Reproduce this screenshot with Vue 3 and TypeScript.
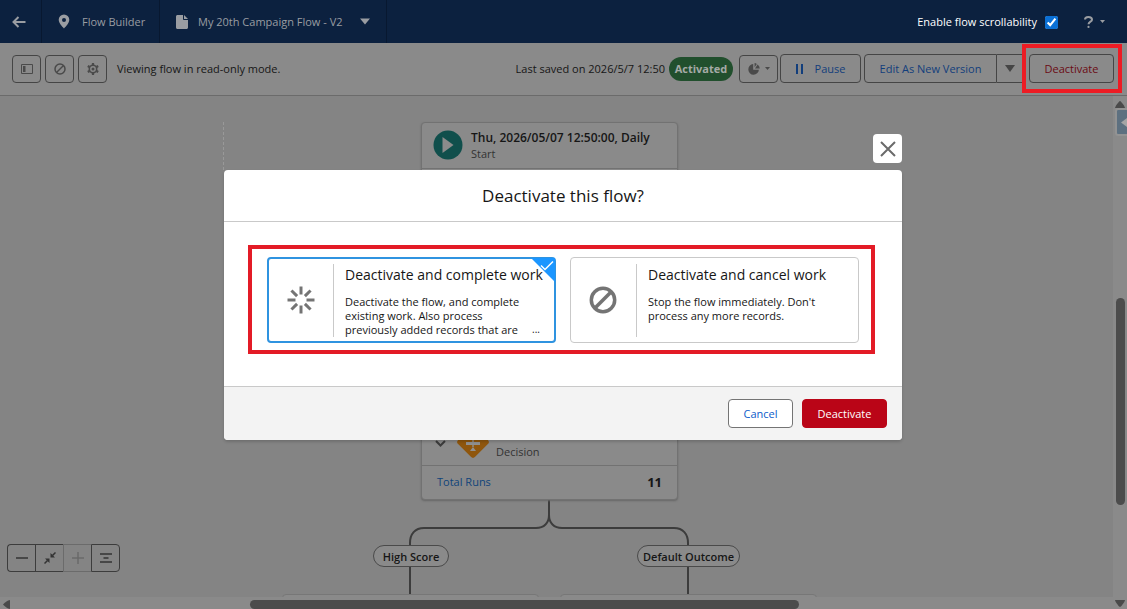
<script setup lang="ts">
import { ref } from 'vue'

type Mode = 'complete' | 'cancel'

interface Choice {
  id: Mode
  title: string
  lines: string[]
  clipped: boolean
}

const scrollable = ref(true)
const mode = ref<Mode>('complete')

const choices: Choice[] = [
  {
    id: 'complete',
    title: 'Deactivate and complete work',
    lines: ['Deactivate the flow, and complete', 'existing work. Also process', 'previously added records that are'],
    clipped: true,
  },
  {
    id: 'cancel',
    title: 'Deactivate and cancel work',
    lines: ["Stop the flow immediately. Don't", 'process any more records.'],
    clipped: false,
  },
]

const spokes = [0, 45, 90, 135, 180, 225, 270, 315]
</script>

<template>
  <div class="app">
    <header class="topbar">
      <button class="back" type="button" aria-label="Back">
        <svg width="14" height="12" viewBox="0 0 14 12" fill="none" stroke="currentColor" stroke-width="2"><path d="M13.500 6H1.500M6.500 1L1.500 6l5 5" /></svg>
      </button>
      <div class="crumb builder">
        <svg width="12" height="15" viewBox="0 0 12 15"><path fill="currentColor" fill-rule="evenodd" d="M6 .5a5.300 5.300 0 0 0-5.300 5.300C.7 9.500 6 14.500 6 14.500s5.300-5 5.300-8.700A5.300 5.300 0 0 0 6 .5zm0 3.400a2 2 0 1 1 0 4 2 2 0 0 1 0-4z" /></svg>
        <span>Flow Builder</span>
      </div>
      <button class="crumb flow" type="button">
        <svg width="12" height="14" viewBox="0 0 12 14"><path fill="currentColor" d="M1.500 0H7v4.200c0 .5.300.8.800.8H12v7.500c0 .8-.7 1.500-1.500 1.500h-9C.7 14 0 13.300 0 12.500v-11C0 .7.700 0 1.500 0zM8 0l4 4H8z" /></svg>
        <span>My 20th Campaign Flow - V2</span>
        <svg class="caret" width="10" height="7" viewBox="0 0 10 7"><path fill="currentColor" d="M0 .5h10L5 6.500z" /></svg>
      </button>
      <label class="scroll-toggle">
        <span>Enable flow scrollability</span>
        <input v-model="scrollable" type="checkbox" />
      </label>
      <button class="help" type="button" aria-label="Help">
        <svg width="9" height="12" viewBox="0 0 9 12"><path fill="none" stroke="currentColor" stroke-width="2" d="M1 3.500C1 2 2.500 1 4.300 1S8 2 8 3.700C8 5.700 4.500 5.700 4.500 8.300" /><circle cx="4.500" cy="10.900" r="1.100" fill="currentColor" /></svg>
        <svg width="5" height="3" viewBox="0 0 5 3"><path fill="currentColor" d="M0 0h5L2.500 3z" /></svg>
      </button>
    </header>

    <div class="toolbar">
      <div class="tools">
        <button class="btn square" type="button" aria-label="Toggle toolbox">
          <svg width="12" height="10" viewBox="0 0 12 10"><path fill="none" stroke="currentColor" d="M.5.5h11v9H.5z" /><path fill="currentColor" d="M2 2h2.500v6H2z" /></svg>
        </button>
        <button class="btn square" type="button" aria-label="Cancel selection">
          <svg width="12" height="12" viewBox="0 0 12 12" fill="none" stroke="currentColor" stroke-width="1.500"><circle cx="6" cy="6" r="5" /><path d="M2.500 9.500l7-7" /></svg>
        </button>
        <button class="btn square" type="button" aria-label="Settings">
          <svg width="12" height="12" viewBox="0 0 12 12" fill="none" stroke="currentColor"><circle cx="6" cy="6" r="3.700" stroke-width="1.600" /><circle cx="6" cy="6" r="1.500" fill="currentColor" stroke="none" /><path stroke-width="2.200" d="M6 0v2M6 10v2M.8 3l1.700 1M9.500 8l1.700 1M.8 9l1.700-1M9.500 4l1.700-1" /></svg>
        </button>
      </div>
      <span class="status">Viewing flow in read-only mode.</span>
      <span class="saved">Last saved on 2026/5/7 12:50</span>
      <span class="badge">Activated</span>
      <button class="btn chart" type="button" aria-label="Analytics">
        <svg width="12" height="12" viewBox="0 0 12 12"><path fill="currentColor" d="M5.200 1.100v5.700h5.700A5.300 5.300 0 1 1 5.200 1.100z" /><path fill="currentColor" d="M6.600 0A5.300 5.300 0 0 1 8.800 1L6.600 4.200zM9.600 1.500A5.300 5.300 0 0 1 11.800 5.400H7z" /></svg>
        <svg width="5" height="3" viewBox="0 0 5 3"><path fill="currentColor" d="M0 0h5L2.500 3z" /></svg>
      </button>
      <button class="btn link pause" type="button">
        <svg width="7" height="10" viewBox="0 0 7 10"><path fill="currentColor" d="M0 0h2v10H0zM5 0h2v10H5z" /></svg>
        <span>Pause</span>
      </button>
      <div class="split">
        <button class="btn link edit" type="button">Edit As New Version</button>
        <button class="btn more" type="button" aria-label="More save options">
          <svg width="10" height="7" viewBox="0 0 10 7"><path fill="currentColor" d="M0 0h10L5 7z" /></svg>
        </button>
      </div>
      <div class="deact">
        <button class="btn danger-text" type="button">Deactivate</button>
        <div class="callout-ring"></div>
      </div>
    </div>

    <main class="workspace">
      <div class="canvas">
        <div class="guide"></div>
        <svg class="lines" width="820" height="501" viewBox="0 0 820 501" fill="none" stroke="#3c3c3c" stroke-width="2">
          <path d="M549 403v16c0 8-5 13-13 13H424c-9 0-14 6-14 15v51" />
          <path d="M549 403v16c0 8 5 13 13 13h112c9 0 14 6 14 15v51" />
        </svg>
        <article class="node start">
          <div class="node-head">
            <svg width="30" height="30" viewBox="0 0 30 30"><circle cx="15" cy="15" r="14.500" fill="#104f4c" /><path d="M9.500 7l11 8-11 8z" fill="#8b8b8b" /></svg>
            <div>
              <strong>Thu, 2026/05/07 12:50:00, Daily</strong>
              <span>Start</span>
            </div>
          </div>
        </article>
        <article class="node decision">
          <div class="decision-head">
            <svg class="chev" width="11" height="7" viewBox="0 0 11 7" fill="none" stroke="#3c3c3c" stroke-width="2"><path d="M1 1l4.500 4.500L10 1" /></svg>
            <svg width="36" height="36" viewBox="0 0 36 36"><rect x="6" y="6" width="24" height="24" rx="3" transform="rotate(45 18 18)" fill="#8f560d" /><path fill="#909090" d="M11 18h14v3H11zM17.300 15h1.400v8h-1.400zM15 27l3-4 3 4z" /></svg>
            <span>Decision</span>
          </div>
          <div class="runs"><a href="#runs">Total Runs</a><b>11</b></div>
        </article>
        <span class="pill high">High Score</span>
        <span class="pill default">Default Outcome</span>
        <div class="stub stub-a"></div>
        <div class="stub stub-b"></div>
        <div class="zoombar">
          <button type="button" aria-label="Zoom out"><svg width="12" height="12" viewBox="0 0 12 12" stroke="currentColor" stroke-width="1.500"><path d="M0 6h12" /></svg></button>
          <button type="button" aria-label="Zoom to fit"><svg width="12" height="12" viewBox="0 0 12 12" fill="currentColor" stroke="currentColor" stroke-width="1.500"><path d="M.5 11.500L3.500 8.500M11.500.5L8.500 3.500" /><path stroke="none" d="M1 6.500h4.500V11zM6.500 1v4.500H11z" /></svg></button>
          <button type="button" aria-label="Zoom in" disabled><svg width="12" height="12" viewBox="0 0 12 12" stroke="currentColor" stroke-width="1.500"><path d="M0 6h12M6 0v12" /></svg></button>
          <button type="button" aria-label="Arrange"><svg width="12" height="10" viewBox="0 0 12 10" stroke="currentColor" stroke-width="1.500"><path d="M0 1h12M3.500 5h5M0 9h12" /></svg></button>
        </div>
      </div>
      <div class="vbar">
        <svg width="10" height="7" viewBox="0 0 10 7"><path fill="#4a4a4a" d="M0 7c0-1 3-6 5-7 2 1 5 6 5 7z" /></svg>
        <button class="panel" type="button" aria-label="Open panel"><svg width="6" height="9" viewBox="0 0 6 9"><path fill="#a5a5a5" d="M6 0v9L0 4.500z" /></svg></button>
        <div class="vthumb"></div>
        <svg class="down" width="10" height="7" viewBox="0 0 10 7"><path fill="#4a4a4a" d="M0 0h10c0 1-3 6-5 7-2-1-5-6-5-7z" /></svg>
      </div>
      <div class="hbar">
        <svg width="7" height="9" viewBox="0 0 7 9"><path fill="#4a4a4a" d="M7 0v9C5 9 1 6 0 4.500 1 3 5 0 7 0z" /></svg>
        <div class="hthumb"></div>
      </div>
    </main>

    <div class="overlay">
      <section class="dialog" role="dialog" aria-modal="true" aria-labelledby="dialog-title">
        <button class="close" type="button" aria-label="Close">
          <svg width="16" height="16" viewBox="0 0 16 16" stroke="#6b6b6b" stroke-width="2"><path d="M1 1l14 14M15 1L1 15" /></svg>
        </button>
        <div class="sheet">
          <h1 id="dialog-title">Deactivate this flow?</h1>
          <div class="body">
            <div class="choices">
              <label v-for="c in choices" :key="c.id" class="choice" :class="{ selected: mode === c.id }">
                <input v-model="mode" type="radio" name="mode" :value="c.id" />
                <span class="pic">
                  <svg v-if="c.id === 'complete'" width="28" height="28" viewBox="0 0 28 28" stroke="#747474" stroke-width="3">
                    <path v-for="a in spokes" :key="a" d="M14 .5v8" :transform="`rotate(${a} 14 14)`" />
                  </svg>
                  <svg v-else width="28" height="28" viewBox="0 0 28 28" fill="none" stroke="#747474" stroke-width="3.500"><circle cx="14" cy="14" r="11.700" /><path d="M6 22L22 6" /></svg>
                </span>
                <span class="copy">
                  <span class="name">{{ c.title }}</span>
                  <span v-for="line in c.lines" :key="line" class="line">{{ line }}</span>
                  <span v-if="c.clipped" class="dots">...</span>
                </span>
                <svg v-if="mode === c.id" class="corner" width="24" height="24" viewBox="0 0 24 24"><path fill="#1b96ff" d="M0 0h24v24z" /><path fill="none" stroke="#fff" stroke-width="1.500" d="M10 7.500l4 4 8-8" /></svg>
              </label>
            </div>
          </div>
          <footer class="foot">
            <button class="btn link cancel" type="button">Cancel</button>
            <button class="btn confirm" type="button">Deactivate</button>
          </footer>
        </div>
      </section>
    </div>
  </div>
</template>

<style>
body {
  margin: 0;
}
</style>

<style scoped>
.app {
  position: relative;
  display: flex;
  flex-direction: column;
  height: 100vh;
  overflow: hidden;
  font-family: "Open Sans", "Noto Sans", sans-serif;
  font-size: 11px;
  line-height: 16px;
  color: #161616;
  background: #848484;
}
.app *,
.app *::before {
  box-sizing: border-box;
}
button {
  padding: 0;
  border: 0;
  background: none;
  color: inherit;
  font: inherit;
  white-space: nowrap;
}
svg {
  display: block;
  flex: none;
}
.topbar {
  display: flex;
  flex: none;
  height: 43px;
  padding-right: 22px;
  background: #0c213f;
  color: #9a9da2;
}
.back,
.crumb {
  display: flex;
  align-items: center;
  border-right: 1px solid #081830;
}
.back {
  justify-content: center;
  width: 42px;
  padding-right: 3px;
}
.builder {
  gap: 12px;
  width: 118px;
  padding-left: 16px;
}
.flow {
  gap: 10px;
  width: 227px;
  padding: 0 16px;
}
.caret {
  margin-left: auto;
}
.scroll-toggle {
  display: flex;
  align-items: center;
  gap: 8px;
  margin-left: auto;
  color: #fff;
  font-weight: 500;
}
.scroll-toggle input {
  width: 13px;
  height: 13px;
  margin: 2px 0 0;
  accent-color: #0b70d5;
}
.help {
  display: flex;
  align-items: center;
  gap: 7px;
  margin-left: 26px;
}
.toolbar {
  display: flex;
  flex: none;
  align-items: center;
  height: 53px;
  padding: 0 13px 1px 12px;
  border-bottom: 1px solid #6b6b6b;
  background: #8a8a8a;
  white-space: nowrap;
}
.tools {
  display: flex;
  gap: 4px;
}
.btn {
  display: flex;
  align-items: center;
  justify-content: center;
  height: 29px;
  border: 1px solid #454545;
  border-radius: 4px;
}
.square {
  width: 29px;
  height: 28px;
  color: #4a4a4a;
}
.status {
  margin-left: 10px;
}
.saved {
  margin-left: auto;
}
.badge {
  width: 64px;
  margin: 0 6px 0 4px;
  padding: 4px 0;
  border-radius: 12px;
  background: #214f2d;
  color: #a5aaa6;
  font-weight: 700;
  text-align: center;
}
.chart {
  gap: 5px;
  width: 39px;
  height: 28px;
  color: #4a4a4a;
}
.link {
  color: #123e7c;
}
.pause {
  gap: 12px;
  width: 81px;
  margin: 0 3px 0 2px;
}
.split {
  display: flex;
}
.edit {
  width: 133px;
  border-radius: 4px 0 0 4px;
}
.more {
  width: 26px;
  border-left: 0;
  border-right: 0;
  border-radius: 0;
  color: #454545;
}
.deact {
  position: relative;
  margin-left: 6px;
}
.danger-text {
  width: 85px;
  color: #6a0a14;
}
.callout-ring {
  position: absolute;
  inset: -10px -8px -10px -7px;
  border: 4px solid #ed1c24;
  pointer-events: none;
}
.workspace {
  display: grid;
  flex: 1;
  grid-template-columns: minmax(0, 1fr) 14px;
  grid-template-rows: minmax(0, 1fr) 12px;
  min-height: 0;
}
.canvas {
  position: relative;
  overflow: hidden;
}
.lines {
  position: absolute;
  top: 0;
  left: 0;
}
.guide {
  position: absolute;
  top: 26px;
  left: 223px;
  height: 48px;
  border-left: 1px dashed #999;
}
.node {
  position: absolute;
  left: 421px;
  width: 257px;
  border: 1px solid #727272;
  border-radius: 4px;
  background: #8a8a8a;
  box-shadow: 0 1px 2px #666;
}
.start {
  top: 26px;
  height: 90px;
}
.node-head {
  display: flex;
  gap: 8px;
  height: 46px;
  padding: 7px 11px;
  border-bottom: 1px solid #727272;
}
.node-head strong,
.node-head span {
  display: block;
}
.node-head strong {
  font-size: 12px;
  font-weight: 600;
}
.node-head span,
.decision-head span {
  color: #333;
}
.decision {
  top: 320px;
}
.decision-head {
  display: flex;
  align-items: flex-end;
  height: 49px;
  padding: 0 13px 5px;
  border-bottom: 1px solid #727272;
}
.chev {
  margin: 0 9px 13px 0;
}
.decision-head span {
  margin-left: 5px;
}
.runs {
  display: flex;
  align-items: center;
  justify-content: space-between;
  height: 33px;
  padding: 0 15px 2px;
}
.runs a {
  color: #10447a;
  text-decoration: none;
}
.runs b {
  font-size: 13px;
}
.pill {
  position: absolute;
  top: 449px;
  height: 22px;
  padding: 3px 0;
  border: 1px solid #4a4a4a;
  border-radius: 11px;
  background: #8a8a8a;
  font-weight: 600;
  text-align: center;
  white-space: nowrap;
}
.high {
  left: 373px;
  width: 76px;
}
.default {
  left: 637px;
  width: 103px;
}
.stub {
  position: absolute;
  top: 498px;
  width: 257px;
  height: 20px;
  border: 1px solid #777;
  border-radius: 4px;
  background: #8a8a8a;
}
.stub-a {
  left: 282px;
}
.stub-b {
  left: 560px;
}
.zoombar {
  position: absolute;
  bottom: 25px;
  left: 7px;
  display: flex;
}
.zoombar button {
  display: flex;
  align-items: center;
  justify-content: center;
  width: 28px;
  height: 28px;
  border: 1px solid #3c3c3c;
  border-right-width: 0;
  color: #333;
}
.zoombar button:first-child {
  border-radius: 4px 0 0 4px;
}
.zoombar button:last-child {
  width: 29px;
  border-right-width: 1px;
  border-radius: 0 4px 4px 0;
}
.zoombar button:disabled {
  border-color: #6b6b6b;
  color: #696969;
}
.vbar {
  position: relative;
  display: flex;
  flex-direction: column;
  grid-row: 1 / 3;
  grid-column: 2;
  align-items: center;
  padding: 5px 0 2px;
  background: #8a8a8a;
}
.panel {
  display: flex;
  align-items: center;
  justify-content: flex-end;
  align-self: flex-end;
  width: 12px;
  height: 28px;
  border: 2px solid #939393;
  border-right: 0;
  border-radius: 3px 0 0 3px;
  background: #5d7080;
}
.vthumb {
  position: absolute;
  top: 39.4%;
  right: 2px;
  width: 9px;
  height: 40.4%;
  border-radius: 5px;
  background: #4c4c4c;
}
.down {
  margin-top: auto;
}
.hbar {
  position: relative;
  grid-row: 2;
  grid-column: 1;
  padding: 3px;
  background: #8a8a8a;
}
.hthumb {
  position: absolute;
  top: 3px;
  bottom: 0;
  left: 22.5%;
  width: 49.3%;
  border-radius: 5px;
  background: #4c4c4c;
}
.overlay {
  position: absolute;
  inset: 0;
  display: flex;
  align-items: flex-start;
  justify-content: center;
  padding: 134px 1px 0 0;
}
.dialog {
  display: flex;
  flex-direction: column;
  gap: 7px;
  width: 90%;
  max-width: 678px;
}
.close {
  display: flex;
  align-items: center;
  justify-content: center;
  align-self: flex-end;
  width: 29px;
  height: 29px;
  border-radius: 4px;
  background: #fff;
}
.sheet {
  overflow: hidden;
  border-radius: 4px;
  background: #fff;
  box-shadow: 0 2px 3px rgba(0, 0, 0, 0.16);
}
h1 {
  margin: 0;
  padding: 14px 16px 13px;
  border-bottom: 1px solid #c9c9c9;
  font-size: 17px;
  font-weight: 400;
  line-height: 24px;
  text-align: center;
}
.body {
  padding: 23px 27px 32px 24px;
}
.choices {
  display: grid;
  grid-template-columns: 1fr 1fr;
  gap: 14px;
  padding: 8px 12px 7px 15px;
  border: 4px solid #e31b26;
}
.choice {
  position: relative;
  display: flex;
  height: 86px;
  padding: 6px 0 5px;
  border: 1px solid #c9c9c9;
  border-radius: 4px;
}
.choice.selected {
  padding: 5px 0 4px;
  border: 2px solid #2f93e0;
}
.choice input {
  position: absolute;
  opacity: 0;
  margin: 0;
}
.pic {
  display: flex;
  align-items: center;
  justify-content: center;
  width: 66px;
  padding: 0 1px 2px 0;
  border-right: 1px solid #c9c9c9;
}
.selected .pic {
  width: 65px;
}
.copy {
  position: relative;
  padding-left: 11px;
}
.name,
.line {
  display: block;
  white-space: nowrap;
}
.name {
  margin: 2px 0 11px;
  font-size: 14px;
  line-height: 18px;
}
.line {
  line-height: 14px;
}
.dots {
  position: absolute;
  bottom: 1px;
  left: 198px;
  font-size: 10px;
  line-height: 14px;
}
.corner {
  position: absolute;
  top: -1px;
  right: -1px;
}
.foot {
  display: flex;
  justify-content: flex-end;
  gap: 9px;
  padding: 12px 15px;
  border-top: 1px solid #c9c9c9;
  background: #f3f3f3;
}
.cancel {
  width: 65px;
  border-color: #747474;
  background: #fff;
  color: #0b5cca;
}
.confirm {
  width: 85px;
  border-color: #ba0517;
  background: #ba0517;
  color: #fff;
}
</style>
